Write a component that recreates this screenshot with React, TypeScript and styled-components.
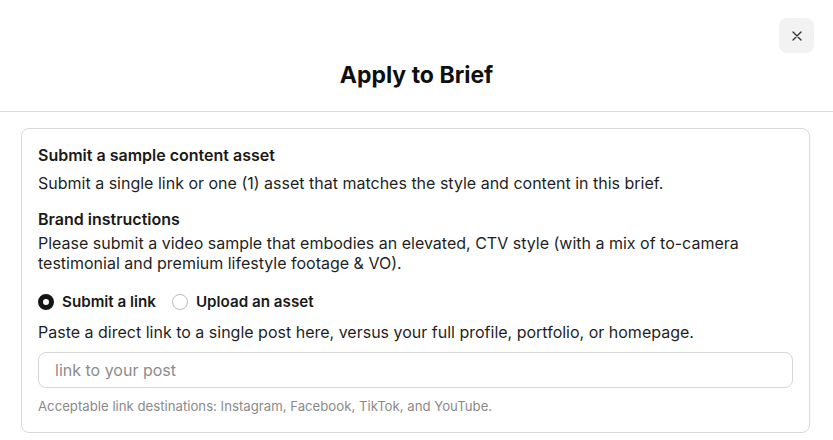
import * as React from 'react';
import styled, { createGlobalStyle } from 'styled-components';

const GlobalStyle = createGlobalStyle`
  * { box-sizing: border-box; }
  body {
    margin: 0;
    background: #ffffff;
    font-family: Inter, "Noto Sans", "Liberation Sans", sans-serif;
    color: #1c1c1c;
  }
`;

const Modal = styled.div`
  width: 833px;
  height: 440px;
  background: #ffffff;
  overflow: hidden;
`;

const Header = styled.header`
  position: relative;
  height: 112px;
  border-bottom: 1px solid #dcdcdc;
  display: flex;
  align-items: flex-end;
  justify-content: center;
  padding-bottom: 22px;
`;

const Title = styled.h1`
  margin: 0;
  font-size: 23px;
  line-height: 28px;
  font-weight: 700;
  color: #0f0f0f;
`;

const CloseButton = styled.button`
  position: absolute;
  top: 18px;
  right: 19px;
  width: 35px;
  height: 35px;
  border: none;
  border-radius: 8px;
  background: #f2f2f2;
  display: flex;
  align-items: center;
  justify-content: center;
  padding: 0;
  cursor: pointer;
`;

const Body = styled.div`
  padding: 16px 23px 0 21px;
`;

const Card = styled.section`
  border: 1px solid #d9d9d9;
  border-radius: 8px;
  padding: 16px 16px 17px;
  display: flex;
  flex-direction: column;
`;

const Heading = styled.h2<{ $top?: number }>`
  margin: ${(p) => p.$top ?? 0}px 0 0;
  font-size: 16px;
  line-height: 20px;
  font-weight: 600;
  color: #1a1a1a;
`;

const Text = styled.p<{ $top?: number }>`
  margin: ${(p) => p.$top ?? 0}px 0 0;
  font-size: 16px;
  line-height: 20px;
  font-weight: 400;
  color: #1f1f1f;
`;

const RadioGroup = styled.div`
  margin-top: 19px;
  display: flex;
  align-items: center;
  gap: 16px;
`;

const RadioOption = styled.label`
  display: flex;
  align-items: center;
  gap: 8px;
  font-size: 15.2px;
  line-height: 20px;
  font-weight: 600;
  color: #1a1a1a;
`;

const RadioDot = styled.span<{ $checked?: boolean }>`
  width: 16px;
  height: 16px;
  border-radius: 50%;
  flex: none;
  background: #ffffff;
  border: ${(p) => (p.$checked ? '5px solid #141414' : '1px solid #bdbdbd')};
`;

const Input = styled.input`
  margin-top: 10px;
  height: 36px;
  width: 100%;
  border: 1px solid #d6d6d6;
  border-radius: 8px;
  padding: 0 16px;
  font-family: inherit;
  font-size: 16px;
  color: #1a1a1a;
  outline: none;
  &::placeholder {
    color: #8c8c8c;
  }
`;

const Helper = styled.p`
  margin: 9px 0 0;
  font-size: 13.2px;
  line-height: 18px;
  color: #8a8a8a;
`;

const CloseIcon = () => (
  <svg width="10" height="10" viewBox="0 0 10 10" fill="none">
    <path d="M1 1L9 9M9 1L1 9" stroke="#2a2a2a" strokeWidth="1.2" strokeLinecap="round" />
  </svg>
);

const App: React.FC = () => {
  return (
    <Modal>
      <GlobalStyle />
      <Header>
        <Title>Apply to Brief</Title>
        <CloseButton aria-label="Close">
          <CloseIcon />
        </CloseButton>
      </Header>
      <Body>
        <Card>
          <Heading>Submit a sample content asset</Heading>
          <Text $top={8}>Submit a single link or one (1) asset that matches the style and content in this brief.</Text>
          <Heading $top={16}>Brand instructions</Heading>
          <Text $top={4}>
            Please submit a video sample that embodies an elevated, CTV style (with a mix of to-camera
            testimonial and premium lifestyle footage &amp; VO).
          </Text>
          <RadioGroup>
            <RadioOption>
              <RadioDot $checked />
              Submit a link
            </RadioOption>
            <RadioOption>
              <RadioDot />
              Upload an asset
            </RadioOption>
          </RadioGroup>
          <Text $top={10}>Paste a direct link to a single post here, versus your full profile, portfolio, or homepage.</Text>
          <Input placeholder="link to your post" />
          <Helper>Acceptable link destinations: Instagram, Facebook, TikTok, and YouTube.</Helper>
        </Card>
      </Body>
    </Modal>
  );
};

export default App;
